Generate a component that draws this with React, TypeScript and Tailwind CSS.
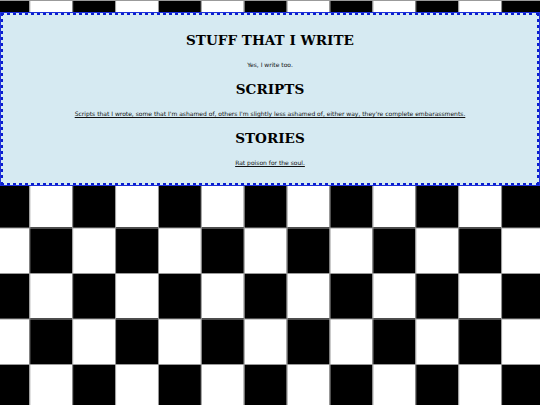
export default function App() {
  return (
    <div className="min-h-screen w-full overflow-hidden pt-3 [background-color:#fff] [background-image:linear-gradient(to_right,#9a9a9a_1px,transparent_1px),linear-gradient(to_bottom,#9a9a9a_1px,transparent_1px),conic-gradient(#fff_0_25%,#000_0_50%,#fff_0_75%,#000_0)] [background-size:42.9px_45.5px,42.9px_45.5px,85.8px_91px] [background-position:-13.6px_0,-13.6px_0,-13.6px_0]">
      {/* main panel */}
      <div className="w-full border-[3px] border-dotted border-[#0a1ed0] bg-[#d6eaf2] pt-[13px] pb-[8px] text-center outline-1 outline-solid outline-[#1f30d8] -outline-offset-1">
        <h2 className="font-['DejaVu_Serif',serif] text-[13.6px] font-bold leading-[25px] text-black">
          STUFF THAT I WRITE
        </h2>
        <p className="font-['DejaVu_Sans',sans-serif] text-[6px] leading-[24px] text-[#111]">
          Yes, I write too.
        </p>
        <h2 className="font-['DejaVu_Serif',serif] text-[13.6px] font-bold leading-[25px] text-black">
          SCRIPTS
        </h2>
        <p className="font-['DejaVu_Sans',sans-serif] text-[6px] leading-[24px] text-[#111]">
          <a href="#scripts" className="underline">
            Scripts that I wrote, some that I'm ashamed of, others I'm slightly less ashamed of, either way, they're complete embarassments.
          </a>
        </p>
        <h2 className="font-['DejaVu_Serif',serif] text-[13.6px] font-bold leading-[25px] text-black">
          STORIES
        </h2>
        <p className="font-['DejaVu_Sans',sans-serif] text-[6px] leading-[24px] text-[#111]">
          <a href="#stories" className="underline">
            Rat poison for the soul.
          </a>
        </p>
      </div>
    </div>
  );
}
